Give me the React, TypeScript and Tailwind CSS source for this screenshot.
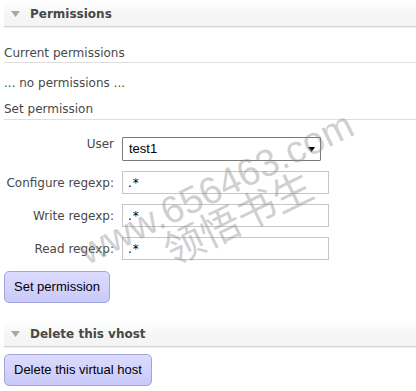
import React from "react";

function Tri() {
  return (
    <svg width="9" height="6" viewBox="0 0 9 6" className="shrink-0">
      <polygon points="0,0 9,0 4.5,6" fill="#a8a8a8" />
    </svg>
  );
}

function SectionBar({ title, className }: { title: string; className?: string }) {
  return (
    <div
      className={
        "h-[26px] flex items-center pl-[7px] bg-gradient-to-b from-[#ffffff] via-[#f6f6f6] to-[#f4f4f4] border-b border-[#d2d2d2] shadow-[0_1px_0_#f0f0f0] " +
        (className ?? "")
      }
    >
      <Tri />
      <span className="ml-[10px] font-bold text-[12px] leading-[14px] text-[#484848]">{title}</span>
    </div>
  );
}

function Btn({ label }: { label: string }) {
  return (
    <div className="inline-flex h-[32px] items-center px-[9px] rounded-[5px] border border-[#a3a3dc] bg-gradient-to-b from-[#dcdcff] to-[#c9c9f8] text-black text-[13px] font-['Liberation_Sans',Arial,sans-serif]">
      {label}
    </div>
  );
}

function Row({ label, children, top }: { label: string; children: React.ReactNode; top?: boolean }) {
  return (
    <div className={"flex " + (top ? "items-start" : "items-center")}>
      <div className="w-[110px] text-right leading-[14px] shrink-0">{label}</div>
      <div className="ml-2">{children}</div>
    </div>
  );
}

function TextInput() {
  return (
    <div className="w-[207px] h-[23px] border border-[#c6c6c6] bg-white flex items-center pl-[5px] text-[12px] text-black tracking-[1px]">
      .*
    </div>
  );
}

export default function App() {
  return (
    <div className="relative w-[416px] h-[391px] overflow-hidden bg-white pl-1 font-['DejaVu_Sans',Verdana,sans-serif] text-[12px] text-[#484848]">
      <div className="mt-px">
        <SectionBar title="Permissions" />
      </div>
      <div className="mt-[19px] leading-[14px] pb-[2px] border-b border-[#dedede]">Current permissions</div>
      <div className="mt-[13px] leading-[14px]">... no permissions ...</div>
      <div className="mt-[12px] leading-[14px] pb-[3px] border-b border-[#dedede]">Set permission</div>

      <div className="mt-[17px] flex flex-col gap-[10px]">
        <Row label="User" top>
          <div className="w-[199px] h-[24px] border border-[#7a7a7a] rounded-[1px] bg-white flex items-center justify-between pl-[6px] pr-[5px] text-[13px] text-black font-['Liberation_Sans',Arial,sans-serif]">
            <span>test1</span>
            <svg width="7" height="5" viewBox="0 0 7 5">
              <polygon points="0,0 7,0 3.5,5" fill="#000" />
            </svg>
          </div>
        </Row>
        <Row label="Configure regexp:">
          <TextInput />
        </Row>
        <Row label="Write regexp:">
          <TextInput />
        </Row>
        <Row label="Read regexp:">
          <TextInput />
        </Row>
      </div>

      <div className="mt-[11px]">
        <Btn label="Set permission" />
      </div>

      <div className="mt-[18px]">
        <SectionBar title="Delete this vhost" />
      </div>
      <div className="mt-[7px]">
        <Btn label="Delete this virtual host" />
      </div>

      <div className="pointer-events-none absolute left-[216px] top-[188px] -translate-x-1/2 -translate-y-1/2 -rotate-[26deg] whitespace-nowrap text-[38px] leading-none text-[rgba(140,140,140,0.42)] font-['Liberation_Sans',Arial,sans-serif]">
        www.656463.com
      </div>
      <div className="pointer-events-none absolute left-[237px] top-[216px] -translate-x-1/2 -translate-y-1/2 -rotate-[26deg] whitespace-nowrap text-[40px] leading-none text-[rgba(140,140,140,0.42)] font-['Noto_Sans_CJK_SC',sans-serif]">
        领悟书生
      </div>
    </div>
  );
}
